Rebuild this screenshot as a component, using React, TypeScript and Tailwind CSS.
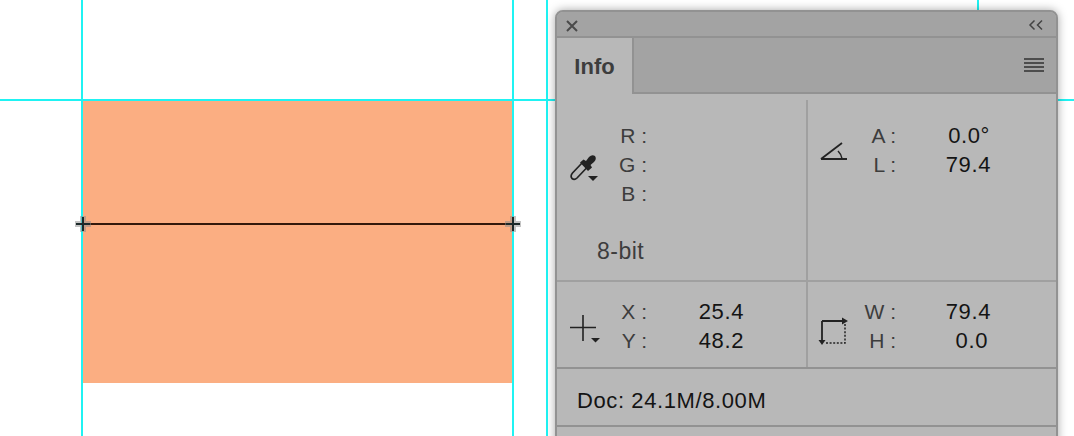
import type { ReactNode } from "react";

const FONT = "font-['Liberation_Sans',sans-serif]";

function Readout({ label, value, valueClass = "w-[97px]" }: { label: string; value?: string; valueClass?: string }) {
  return (
    <div className="flex h-[29px] items-center leading-[29px]">
      <span className="w-[39px] whitespace-nowrap text-right text-[21px] text-[#3d3d3d]">{label}</span>
      <span className={`text-right text-[22px] tracking-[0.6px] text-[#141414] ${valueClass}`}>{value}</span>
    </div>
  );
}

function Section({ icon, children, className = "" }: { icon: ReactNode; children: ReactNode; className?: string }) {
  return (
    <div className={`flex items-start ${className}`}>
      <div className="w-[40px] shrink-0">{icon}</div>
      <div>{children}</div>
    </div>
  );
}

function Eyedropper() {
  return (
    <svg width="32" height="32" viewBox="0 0 32 32">
      <path d="M14 11 L4.5 21 Q2 24 4 26.5 Q6.5 28.5 9 26 L18.5 16" fill="none" stroke="#222" strokeWidth="1.7" />
      <path d="M12 10.5 L15.5 7.5 L18 9 L21 5 Q24 2 27 4 Q29 7 26 10 L22.5 13 L24 15.5 L20 19 Z" fill="#222" />
      <path d="M20 24 H30 L25 29 Z" fill="#222" />
    </svg>
  );
}

function AngleIcon() {
  return (
    <svg width="30" height="24" viewBox="0 0 30 24">
      <path d="M2 20 H28 M2 20 L23 4" fill="none" stroke="#222" strokeWidth="1.8" />
      <path d="M19 12 Q22.5 15.5 23 19.5" fill="none" stroke="#222" strokeWidth="1.5" />
    </svg>
  );
}

function CrossIcon() {
  return (
    <svg width="32" height="32" viewBox="0 0 32 32">
      <path d="M0 12.5 H26 M13 0 V26" fill="none" stroke="#222" strokeWidth="1.6" />
      <path d="M21 23 H30 L25.5 27.5 Z" fill="#222" />
    </svg>
  );
}

function TransformIcon() {
  return (
    <svg width="32" height="30" viewBox="0 0 32 30">
      <path d="M4 5 H25 M4 5 V25" fill="none" stroke="#222" strokeWidth="1.8" />
      <path d="M24 1.5 L30 5 L24 8.5 Z M0.5 24 H7.5 L4 29 Z" fill="#222" />
      <path d="M27 8 V27 H8" fill="none" stroke="#222" strokeWidth="1.5" strokeDasharray="2 1.6" />
    </svg>
  );
}

function Handle({ className }: { className: string }) {
  return (
    <svg width="20" height="20" viewBox="0 0 20 20" className={`absolute ${className}`}>
      <path d="M7 2 H13 V7 H18 V13 H13 V18 H7 V13 H2 V7 H7 Z" fill="#8a8a8a" fillOpacity="0.5" />
      <path d="M3 10 H17 M10 3 V17" stroke="#1c2a2a" strokeWidth="2" />
    </svg>
  );
}

function Canvas() {
  return (
    <>
      {/* document rectangle */}
      <div className="absolute left-[83px] top-[101px] h-[282px] w-[430px] bg-[#fbae82]" />
      {/* guides */}
      <div className="absolute left-[81px] top-0 h-full w-[2px] bg-[#1ff3f3]" />
      <div className="absolute left-[512px] top-0 h-full w-[2px] bg-[#1ff3f3]" />
      <div className="absolute left-[546px] top-0 h-full w-[2px] bg-[#1ff3f3]" />
      <div className="absolute left-[977px] top-0 h-full w-[2px] bg-[#1ff3f3]" />
      <div className="absolute left-0 top-[99px] h-[2px] w-full bg-[#1ff3f3]" />
      {/* measure line */}
      <div className="absolute left-[88px] top-[223px] h-[2px] w-[420px] bg-[#33190c]" />
      <Handle className="left-[73px] top-[214px]" />
      <Handle className="left-[503px] top-[214px]" />
    </>
  );
}

function InfoPanel() {
  return (
    <div className="absolute left-[555px] top-[10px] flex h-[440px] w-[503px] flex-col rounded-t-[8px] border-2 border-[#929292] bg-[#b8b8b8] shadow-[0_0_10px_rgba(0,0,0,0.35)]">
      <div className="flex h-[24px] shrink-0 items-center justify-between rounded-t-[6px] bg-[#a3a3a3] pl-[8px] pr-[12px]">
        <svg width="14" height="14" viewBox="0 0 14 14" className="mt-[4px]">
          <path d="M2 2 L12 12 M12 2 L2 12" stroke="#4a4a4a" strokeWidth="2" />
        </svg>
        <svg width="16" height="12" viewBox="0 0 16 12" className="mt-[2px]">
          <path d="M6.5 1.5 L2 6 L6.5 10.5 M14 1.5 L9.5 6 L14 10.5" fill="none" stroke="#444" strokeWidth="1.5" />
        </svg>
      </div>
      <div className="flex h-[58px] shrink-0 border-t-2 border-[#929292] bg-[#a3a3a3]">
        <div className="flex h-[56px] w-[75px] shrink-0 items-center justify-center bg-[#b8b8b8] text-[22px] font-bold text-[#3d3d3d]">
          Info
        </div>
        <div className="flex flex-1 items-center justify-end border-b-2 border-l-2 border-[#929292] pr-[12px]">
          <div className="flex w-[20px] flex-col gap-[2px]">
            <div className="h-[2px] bg-[#4d4d4d]" />
            <div className="h-[2px] bg-[#4d4d4d]" />
            <div className="h-[2px] bg-[#4d4d4d]" />
            <div className="h-[2px] bg-[#4d4d4d]" />
          </div>
        </div>
      </div>
      <div className="flex h-[188px] shrink-0 border-b-2 border-[#a0a0a0] pt-[6px]">
        <Section className="w-[251px] border-r-2 border-[#a0a0a0] pl-[11px] pt-[21px]" icon={<div className="pt-[31px]"><Eyedropper /></div>}>
          <Readout label="R :" />
          <Readout label="G :" />
          <Readout label="B :" />
          <div className="-ml-[11px] mt-[29px] h-[29px] text-[23px] leading-[29px] tracking-[0.5px] text-[#3d3d3d]">8-bit</div>
        </Section>
        <Section className="flex-1 pl-[9px] pt-[21px]" icon={<div className="ml-[2px] pt-[18px]"><AngleIcon /></div>}>
          <Readout label="A :" value="0.0°" valueClass="w-[95px] pr-[1px]" />
          <Readout label="L :" value="79.4" valueClass="w-[95px]" />
        </Section>
      </div>
      <div className="flex h-[87px] shrink-0 border-b-2 border-[#929292]">
        <Section className="w-[251px] border-r-2 border-[#a0a0a0] pl-[13px] pt-[15px]" icon={<div className="pt-[18px]"><CrossIcon /></div>}>
          <div className="-ml-[2px]">
            <Readout label="X :" value="25.4" />
            <Readout label="Y :" value="48.2" />
          </div>
        </Section>
        <Section className="flex-1 pl-[9px] pt-[15px]" icon={<div className="ml-[1px] pt-[19px]"><TransformIcon /></div>}>
          <Readout label="W :" value="79.4" valueClass="w-[95px]" />
          <Readout label="H :" value="0.0" valueClass="w-[95px] pr-[3px]" />
        </Section>
      </div>
      <div className="flex h-[58px] shrink-0 items-center border-b-2 border-[#929292] pl-[20px] pt-[6px] text-[22px] tracking-[0.6px] text-[#141414]">
        Doc: 24.1M/8.00M
      </div>
    </div>
  );
}

export default function App() {
  return (
    <div className={`relative h-[436px] w-[1074px] overflow-hidden bg-white ${FONT}`}>
      <Canvas />
      <InfoPanel />
    </div>
  );
}
